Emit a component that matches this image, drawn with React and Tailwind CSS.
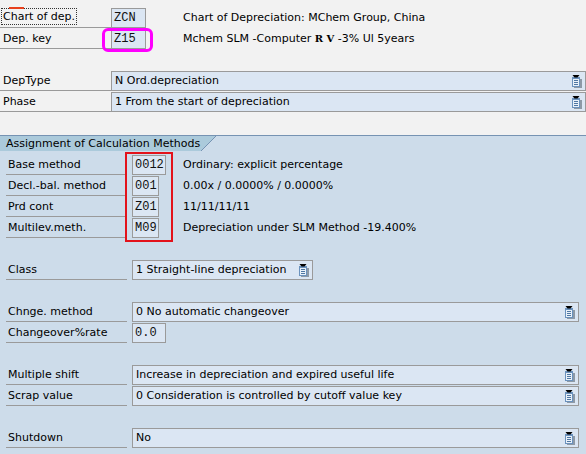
import React from "react";

// F4 value-help button shown at the right end of dropdown fields
function HelpIcon() {
  return (
    <svg width="11" height="13" viewBox="0 0 11 13" className="shrink-0">
      <rect x="3" y="4" width="8" height="9" fill="#8d99a6" />
      <rect x="1" y="2" width="8" height="10" fill="#6b92bd" />
      <rect x="2" y="4" width="6" height="7" fill="#e9f1f9" />
      <rect x="3" y="5" width="4" height="1" fill="#4f77a3" />
      <rect x="3" y="7" width="4" height="1" fill="#4f77a3" />
      <rect x="3" y="9" width="4" height="1" fill="#4f77a3" />
      <path d="M1.5 0h7l-2 2.5h-3z" fill="#000" />
    </svg>
  );
}

function ValueBox({ value, width }) {
  return (
    <div
      className={`${width} h-[20px] shrink-0 border border-[#9a9a9a] bg-[#dbe6f3] pl-[2px] font-['Liberation_Mono',monospace] text-[12px] leading-[18px] text-[#111]`}
    >
      {value}
    </div>
  );
}

function DropBox({ text, width = "flex-1" }) {
  return (
    <div
      className={`${width} flex h-[20px] items-center justify-between border border-[#9a9a9a] bg-[#dbe6f3] pl-[3px] pr-[3px]`}
    >
      <span className="leading-[18px]">{text}</span>
      <HelpIcon />
    </div>
  );
}

function TopLabel({ children }) {
  return (
    <div className="w-[111px] shrink-0 border-b border-[#9a9a9a] pl-[3px] leading-[19px]">
      {children}
    </div>
  );
}

function FieldLabel({ children }) {
  return (
    <div className="mr-[5px] w-[121px] shrink-0 border-b border-[#9a9a9a] pl-[2px] leading-[19px]">
      {children}
    </div>
  );
}

function Row({ children, className = "" }) {
  return <div className={`flex h-[20px] mb-[1px] ${className}`}>{children}</div>;
}

export default function App() {
  return (
    <div className="relative h-[454px] w-[586px] overflow-hidden bg-[#cddcea] font-['DejaVu_Sans',sans-serif] text-[11px] text-black">
      {/* header fields */}
      <div className="relative h-[135px] bg-[#f2f2f2] pt-[8px]">
        <div className="absolute left-[9px] top-[7px] h-[2px] w-[15px] bg-[#e8401c]" />

        <Row>
          <div className="w-[111px] shrink-0 border-b border-[#9a9a9a] pl-[1px]">
            <span className="inline-block border border-dotted border-[#333] px-[1px] leading-[15px]">
              Chart of dep.
            </span>
          </div>
          <ValueBox value="ZCN" width="w-[35px]" />
          <div className="ml-[37px] leading-[20px]">Chart of Depreciation: MChem Group, China</div>
        </Row>
        <Row>
          <TopLabel>Dep. key</TopLabel>
          <ValueBox value="Z15" width="w-[35px]" />
          <div className="ml-[37px] leading-[20px]">
            Mchem SLM -Computer{" "}
            <span className="font-['DejaVu_Serif',serif] text-[10px] font-bold">R V</span>{" "}
            -3% Ul 5years
          </div>
        </Row>
        <div className="h-[21px]" />
        <Row>
          <TopLabel>DepType</TopLabel>
          <DropBox text="N Ord.depreciation" />
        </Row>
        <Row>
          <TopLabel>Phase</TopLabel>
          <DropBox text="1 From the start of depreciation" />
        </Row>

        {/* highlight around the depreciation key */}
        <div className="absolute left-[102px] top-[28px] h-[24px] w-[51px] rounded-[6px] border-[3px] border-[#ff00ff]" />
      </div>

      {/* calculation methods group */}
      <div className="relative border-t border-[#7693b3]">
        <div className="flex h-[15px]">
          <div className="bg-[#abcadb] pl-[6px] pr-[1px] leading-[15px]">
            Assignment of Calculation Methods
          </div>
          <svg width="16" height="15" viewBox="0 0 16 15" className="shrink-0">
            <path d="M0 0H15L0 15Z" fill="#abcadb" />
            <path d="M15 0L0 15" stroke="#7693b3" strokeWidth="1" />
          </svg>
        </div>

        <div className="pl-[6px] pr-[7px] pt-[4px]">
          <Row>
            <FieldLabel>Base method</FieldLabel>
            <ValueBox value="0012" width="w-[34px]" />
            <div className="ml-[17px] leading-[20px]">Ordinary: explicit percentage</div>
          </Row>
          <Row>
            <FieldLabel>Decl.-bal. method</FieldLabel>
            <ValueBox value="001" width="w-[27px]" />
            <div className="ml-[24px] leading-[20px]">0.00x / 0.0000% / 0.0000%</div>
          </Row>
          <Row>
            <FieldLabel>Prd cont</FieldLabel>
            <ValueBox value="Z01" width="w-[27px]" />
            <div className="ml-[24px] leading-[20px]">11/11/11/11</div>
          </Row>
          <Row>
            <FieldLabel>Multilev.meth.</FieldLabel>
            <ValueBox value="M09" width="w-[27px]" />
            <div className="ml-[24px] leading-[20px]">Depreciation under SLM Method -19.400%</div>
          </Row>
          <div className="h-[21px]" />
          <Row>
            <FieldLabel>Class</FieldLabel>
            <DropBox text="1 Straight-line depreciation" width="w-[181px]" />
          </Row>
          <div className="h-[21px]" />
          <Row>
            <FieldLabel>Chnge. method</FieldLabel>
            <DropBox text="0 No automatic changeover" />
          </Row>
          <Row>
            <FieldLabel>Changeover%rate</FieldLabel>
            <ValueBox value="0.0" width="w-[34px]" />
          </Row>
          <div className="h-[21px]" />
          <Row>
            <FieldLabel>Multiple shift</FieldLabel>
            <DropBox text="Increase in depreciation and expired useful life" />
          </Row>
          <Row>
            <FieldLabel>Scrap value</FieldLabel>
            <DropBox text="0 Consideration is controlled by cutoff value key" />
          </Row>
          <div className="h-[21px]" />
          <Row>
            <FieldLabel>Shutdown</FieldLabel>
            <DropBox text="No" />
          </Row>
        </div>

        {/* highlight around the method keys */}
        <div className="absolute left-[125px] top-[16px] h-[90px] w-[48px] border-2 border-[#e3121b]" />
      </div>
    </div>
  );
}
